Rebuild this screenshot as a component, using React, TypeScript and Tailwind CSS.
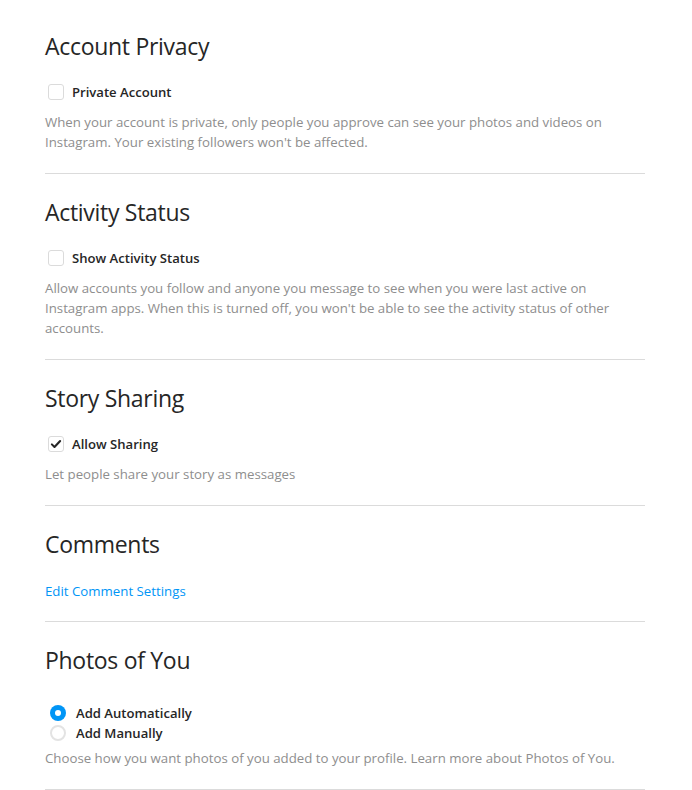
import React, { useState } from 'react'

function Checkbox({ checked, label, onChange }: { checked: boolean; label: string; onChange: () => void }) {
  return (
    <label className="flex items-center h-5 cursor-pointer select-none">
      <span className="ml-[3px] w-4 h-4 rounded-[3px] border border-[#dbdbdb] bg-white flex items-center justify-center">
        {checked && (
          <svg viewBox="0 0 16 16" className="w-3 h-3" fill="none" stroke="#262626" strokeWidth={2.8} strokeLinecap="round" strokeLinejoin="round">
            <path d="M2.5 8.5l3.5 3.5 7.5-8" />
          </svg>
        )}
      </span>
      <input type="checkbox" className="hidden" checked={checked} onChange={onChange} />
      <span className="ml-2 mt-px text-[13.1px] font-semibold text-[#262626]">{label}</span>
    </label>
  )
}

function Radio({ checked, label, onChange }: { checked: boolean; label: string; onChange: () => void }) {
  return (
    <label className="flex items-center h-5 cursor-pointer select-none">
      <span
        className={`ml-[5px] w-4 h-4 rounded-full flex items-center justify-center ${
          checked ? 'bg-[#0095f6]' : 'border-2 border-[#e3e3e3] bg-white'
        }`}
      >
        {checked && <span className="w-[6px] h-[6px] rounded-full bg-white" />}
      </span>
      <input type="radio" className="hidden" checked={checked} onChange={onChange} />
      <span className="ml-[10px] mt-px text-[13.1px] font-semibold text-[#262626]">{label}</span>
    </label>
  )
}

function Section({ title, children }: { title: string; children: React.ReactNode }) {
  return (
    <section className="pt-[23px] pb-[21px] border-b border-[#dbdbdb]">
      <h2 className="text-[23px] leading-[30px] tracking-[-0.3px] font-normal text-[#262626]">{title}</h2>
      {children}
    </section>
  )
}

export default function App() {
  const [privateAccount, setPrivateAccount] = useState(false)
  const [activity, setActivity] = useState(false)
  const [sharing, setSharing] = useState(true)
  const [photos, setPhotos] = useState<'auto' | 'manual'>('auto')

  return (
    <div className="min-h-screen bg-white" style={{ fontFamily: '"Open Sans", "Noto Sans", Arial, sans-serif' }}>
      <div className="w-[600px] ml-[45px] pt-2">
        <Section title="Account Privacy">
          <div className="mt-[21px]">
            <Checkbox checked={privateAccount} label="Private Account" onChange={() => setPrivateAccount(!privateAccount)} />
          </div>
          <p className="mt-[10px] text-[13.25px] leading-5 text-[#8e8e8e]">
            When your account is private, only people you approve can see your photos and videos on Instagram. Your
            existing followers won't be affected.
          </p>
        </Section>

        <Section title="Activity Status">
          <div className="mt-[21px]">
            <Checkbox checked={activity} label="Show Activity Status" onChange={() => setActivity(!activity)} />
          </div>
          <p className="mt-[10px] text-[13.25px] leading-5 text-[#8e8e8e]">
            Allow accounts you follow and anyone you message to see when you were last active on Instagram apps. When
            this is turned off, you won't be able to see the activity status of other accounts.
          </p>
        </Section>

        <Section title="Story Sharing">
          <div className="mt-[21px]">
            <Checkbox checked={sharing} label="Allow Sharing" onChange={() => setSharing(!sharing)} />
          </div>
          <p className="mt-[10px] text-[13.25px] leading-5 text-[#8e8e8e]">Let people share your story as messages</p>
        </Section>

        <section className="pt-[23px] pb-[20px] border-b border-[#dbdbdb]">
          <h2 className="text-[23px] leading-[30px] tracking-[-0.3px] font-normal text-[#262626]">Comments</h2>
          <a href="#" className="block mt-[22px] text-[13.25px] leading-5 text-[#0095f6]">
            Edit Comment Settings
          </a>
        </section>

        <Section title="Photos of You">
          <div className="mt-[28px]">
            <Radio checked={photos === 'auto'} label="Add Automatically" onChange={() => setPhotos('auto')} />
            <Radio checked={photos === 'manual'} label="Add Manually" onChange={() => setPhotos('manual')} />
          </div>
          <p className="mt-[5px] text-[13.25px] leading-5 text-[#8e8e8e]">
            Choose how you want photos of you added to your profile. Learn more about Photos of You.
          </p>
        </Section>
      </div>
    </div>
  )
}
